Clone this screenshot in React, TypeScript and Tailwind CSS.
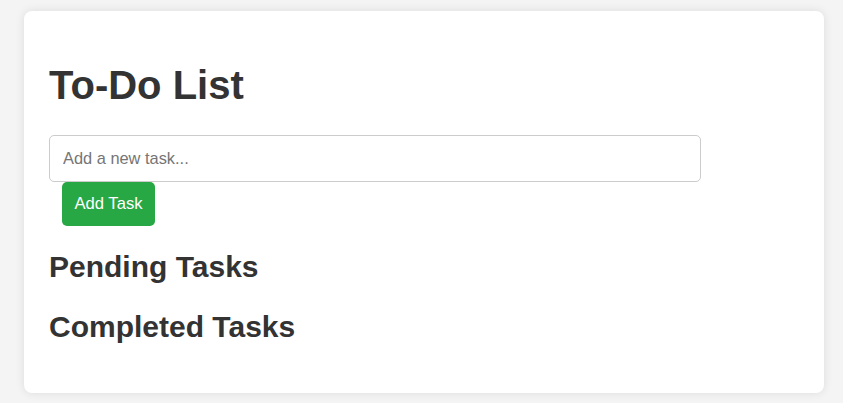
import React from "react";

export default function App() {
  return (
    <div
      className="min-h-screen bg-[#f4f4f4] pt-[11px] pl-[24px]"
      style={{ fontFamily: '"Liberation Sans", Arial, sans-serif' }}
    >
      <div className="w-[800px] h-[382px] bg-white rounded-[8px] shadow-[0_0_10px_rgba(0,0,0,0.1)] pl-[25px] pt-[51px]">
        <h1 className="text-[40px] leading-[46px] font-bold text-[#333] m-0">To-Do List</h1>
        <div className="mt-[27px] flex flex-col items-start">
          <input
            type="text"
            placeholder="Add a new task..."
            className="w-[652px] h-[47px] border border-[#ccc] rounded-[5px] pl-[13px] text-[16.4px] text-[#333] placeholder:text-[#757575] outline-none"
          />
          <button className="ml-[13px] w-[93px] h-[44px] bg-[#28a745] text-white rounded-[5px] text-[16.6px] leading-none">
            Add Task
          </button>
        </div>
        <h2 className="mt-[24px] text-[30px] leading-[34px] font-bold text-[#333]">Pending Tasks</h2>
        <h2 className="mt-[26px] text-[30px] leading-[34px] font-bold text-[#333]">Completed Tasks</h2>
      </div>
    </div>
  );
}
